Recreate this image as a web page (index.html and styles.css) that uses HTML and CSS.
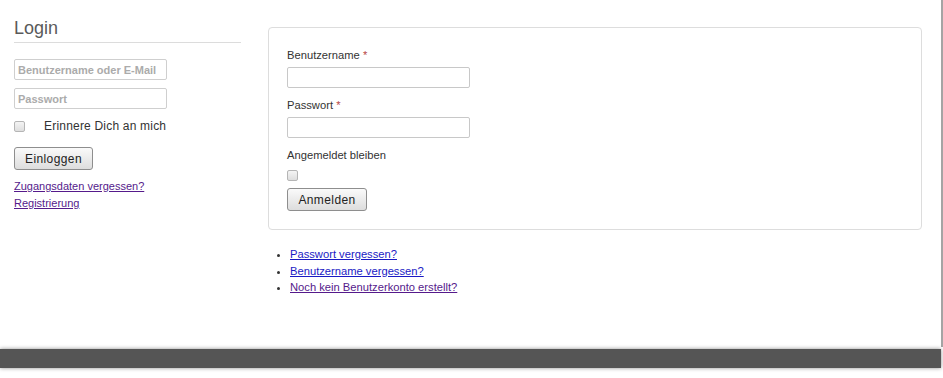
FILE: index.html
```html
<!DOCTYPE html>
<html lang="de">
<head>
    <meta charset="UTF-8">
    <meta name="viewport" content="width=device-width, initial-scale=1.0">
    <title>Login</title>
    <link rel="stylesheet" href="styles.css">
</head>
<body>
    <div class="page">
        <aside class="sidebar">
            <h3>Login</h3>
            <input type="text" class="side-input" placeholder="Benutzername oder E-Mail">
            <input type="password" class="side-input" placeholder="Passwort">
            <div class="remember">
                <input type="checkbox" class="check" id="remember">
                <label for="remember">Erinnere Dich an mich</label>
            </div>
            <button class="btn btn-side">Einloggen</button>
            <div class="side-links">
                <a href="#" class="visited">Zugangsdaten vergessen?</a>
                <a href="#" class="visited">Registrierung</a>
            </div>
        </aside>

        <main class="main">
            <form class="panel">
                <label class="field-label" for="username">Benutzername <span class="star">*</span></label>
                <input type="text" id="username" class="field">

                <label class="field-label" for="password">Passwort <span class="star">*</span></label>
                <input type="password" id="password" class="field">

                <label class="field-label" for="stay">Angemeldet bleiben</label>
                <input type="checkbox" id="stay" class="check check-block">

                <button type="button" class="btn btn-main">Anmelden</button>
            </form>

            <ul class="links">
                <li><a href="#">Passwort vergessen?</a></li>
                <li><a href="#">Benutzername vergessen?</a></li>
                <li><a href="#" class="visited">Noch kein Benutzerkonto erstellt?</a></li>
            </ul>
        </main>
    </div>
    <footer class="footer"></footer>
</body>
</html>
```

FILE: styles.css
```css
body {
    font-family: "Liberation Sans", Arial, sans-serif;
    margin: 0;
    padding: 0;
    background: #ffffff;
    color: #333;
}
.page {
    display: flex;
    width: 943px;
    height: 347px;
    box-sizing: border-box;
    border-right: 2px solid #a4a4a4;
}

/* sidebar */
.sidebar {
    width: 227px;
    padding-left: 14px;
}
.sidebar h3 {
    margin: 17px 0 0;
    padding-bottom: 3px;
    font-size: 18px;
    line-height: 22px;
    font-weight: normal;
    color: #5a5a5a;
    border-bottom: 1px solid #dcdcdc;
}
.side-input {
    display: block;
    box-sizing: border-box;
    width: 153px;
    height: 21px;
    margin: 0;
    padding: 0 3px;
    border: 1px solid #cfcfcf;
    border-radius: 2px;
    font-family: inherit;
    font-size: 11px;
}
.side-input:first-of-type { margin-top: 16px; margin-bottom: 8px; }
.side-input::placeholder { color: #ababab; font-weight: bold; }
.remember {
    display: flex;
    align-items: center;
    margin-top: 10px;
    height: 14px;
    font-size: 12px;
    color: #333;
}
.remember label { margin-left: 19px; letter-spacing: 0.2px; }

.check {
    appearance: none;
    -webkit-appearance: none;
    box-sizing: border-box;
    width: 11px;
    height: 11px;
    margin: 0;
    border: 1px solid #b5b5b5;
    border-radius: 2px;
    background: linear-gradient(#f4f4f4, #dedede);
}
.check-block { display: block; margin-top: 7px; }

.btn {
    display: block;
    box-sizing: border-box;
    margin: 0;
    padding: 0;
    border: 1px solid #8e8e8e;
    border-radius: 3px;
    background: linear-gradient(#fafafa, #dddddd);
    color: #222;
    font-family: inherit;
    font-size: 12px;
    letter-spacing: 0.4px;
}
.btn-side { width: 79px; height: 23px; margin-top: 14px; }
.btn-main { width: 80px; height: 23px; margin-top: 7px; }

.side-links {
    margin-top: 8px;
    font-size: 11px;
    line-height: 17px;
}
.side-links a { display: block; }

a { color: #1a1ac4; }
a.visited { color: #551a8b; }

/* main column */
.main {
    margin-left: 27px;
    padding-top: 27px;
}
.panel {
    box-sizing: border-box;
    width: 654px;
    height: 203px;
    margin: 0;
    padding: 19px 18px 0;
    border: 1px solid #dddddd;
    border-radius: 4px;
}
.field-label {
    display: block;
    font-size: 11.2px;
    line-height: 16px;
    color: #333;
}
.star { color: #b94a48; }
.field {
    display: block;
    box-sizing: border-box;
    width: 183px;
    height: 21px;
    margin: 4px 0 9px;
    padding: 0 3px;
    border: 1px solid #c8c8c8;
    border-radius: 2px;
}
.links {
    margin: 16px 0 0;
    padding-left: 22px;
    font-size: 11.2px;
    line-height: 16.5px;
}

.footer {
    width: 941px;
    height: 19px;
    margin: 2px 0 10px;
    background: #555555;
    box-shadow: 0 0 4px rgba(0, 0, 0, 0.45);
}
```
